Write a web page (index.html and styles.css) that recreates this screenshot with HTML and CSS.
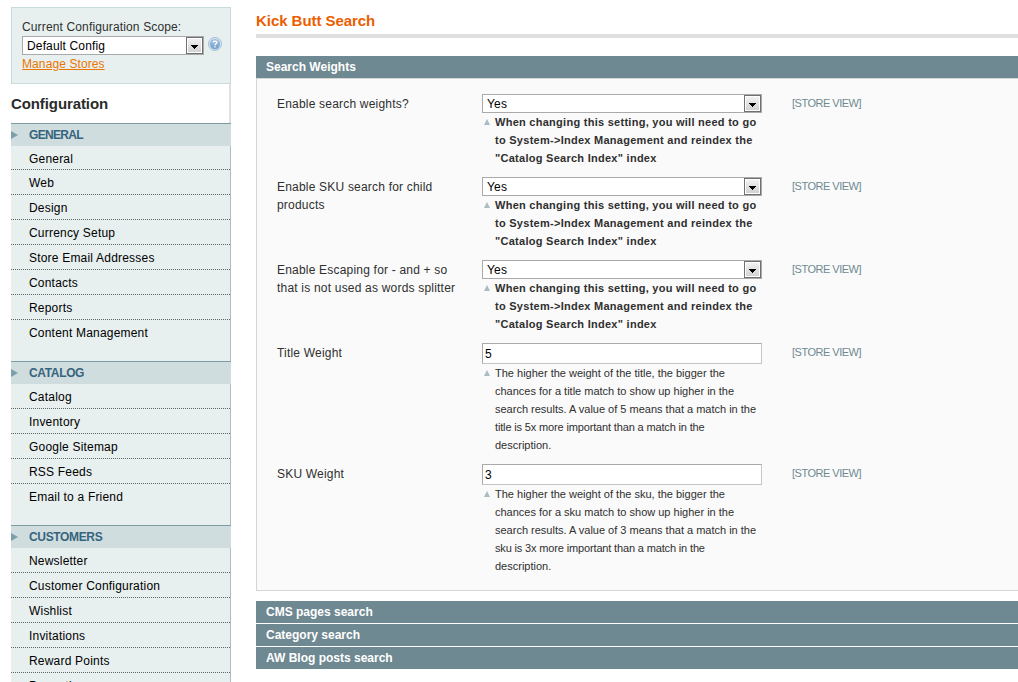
FILE: index.html
```html
<!DOCTYPE html>
<html lang="en">
<head>
<meta charset="utf-8">
<title>Configuration</title>
<link rel="stylesheet" href="styles.css">
</head>
<body>
<div class="page">
  <aside class="sidebar">
    <div class="scope">
      <div class="scope-label">Current Configuration Scope:</div>
      <div class="scope-row">
        <div class="select scope-select"><select><option>Default Config</option></select><span class="arrow"><svg width="7" height="4" viewBox="0 0 7 4" shape-rendering="crispEdges"><path d="M0 0h7v1H6v1H5v1H4v1H3V3H2V2H1V1H0z"/></svg></span></div>
        <svg class="help" width="14" height="14" viewBox="0 0 14 14"><defs><linearGradient id="g" x1="0" y1="0" x2="0" y2="1"><stop offset="0" stop-color="#a9c6e2"/><stop offset="1" stop-color="#6f9dcb"/></linearGradient></defs><circle cx="7" cy="7" r="6.5" fill="#dce8f2" stroke="#9db9d2" stroke-width=".9"/><circle cx="7" cy="7" r="5.2" fill="url(#g)"/><path d="M5.2 5.6C5.2 3.6 8.8 3.6 8.8 5.6 8.8 6.8 7 6.8 7 8.2M7 9.3v1.2" fill="none" stroke="#fff" stroke-width="1.4"/></svg>
      </div>
      <a class="manage" href="#">Manage Stores</a>
    </div>
    <h3 class="side-title">Configuration</h3>
    <nav>
      <section class="group first">
        <h4>GENERAL</h4>
        <ul><li>General</li><li>Web</li><li>Design</li><li>Currency Setup</li><li>Store Email Addresses</li><li>Contacts</li><li>Reports</li><li>Content Management</li></ul>
      </section>
      <section class="group">
        <h4>CATALOG</h4>
        <ul><li>Catalog</li><li>Inventory</li><li>Google Sitemap</li><li>RSS Feeds</li><li>Email to a Friend</li></ul>
      </section>
      <section class="group">
        <h4>CUSTOMERS</h4>
        <ul><li>Newsletter</li><li>Customer Configuration</li><li>Wishlist</li><li>Invitations</li><li>Reward Points</li><li>Promotions</li></ul>
      </section>
    </nav>
  </aside>
  <main class="main">
    <h1>Kick Butt Search</h1>
    <h2 class="bar open">Search Weights</h2>
    <div class="fieldset">
      <div class="row">
        <label>Enable search weights?</label>
        <div class="value">
          <div class="select"><select><option>Yes</option></select><span class="arrow"><svg width="7" height="4" viewBox="0 0 7 4" shape-rendering="crispEdges"><path d="M0 0h7v1H6v1H5v1H4v1H3V3H2V2H1V1H0z"/></svg></span></div>
          <p class="note strong">When changing this setting, you will need to go<br>to System-&gt;Index Management and reindex the<br>"Catalog Search Index" index</p>
        </div>
        <span class="level">[STORE VIEW]</span>
      </div>
      <div class="row">
        <label>Enable SKU search for child<br>products</label>
        <div class="value">
          <div class="select"><select><option>Yes</option></select><span class="arrow"><svg width="7" height="4" viewBox="0 0 7 4" shape-rendering="crispEdges"><path d="M0 0h7v1H6v1H5v1H4v1H3V3H2V2H1V1H0z"/></svg></span></div>
          <p class="note strong">When changing this setting, you will need to go<br>to System-&gt;Index Management and reindex the<br>"Catalog Search Index" index</p>
        </div>
        <span class="level">[STORE VIEW]</span>
      </div>
      <div class="row">
        <label>Enable Escaping for - and + so<br>that is not used as words splitter</label>
        <div class="value">
          <div class="select"><select><option>Yes</option></select><span class="arrow"><svg width="7" height="4" viewBox="0 0 7 4" shape-rendering="crispEdges"><path d="M0 0h7v1H6v1H5v1H4v1H3V3H2V2H1V1H0z"/></svg></span></div>
          <p class="note strong">When changing this setting, you will need to go<br>to System-&gt;Index Management and reindex the<br>"Catalog Search Index" index</p>
        </div>
        <span class="level">[STORE VIEW]</span>
      </div>
      <div class="row">
        <label>Title Weight</label>
        <div class="value">
          <input class="text" value="5">
          <p class="note">The higher the weight of the title, the bigger the<br>chances for a title match to show up higher in the<br>search results. A value of 5 means that a match in the<br><span class="tight">title is 5x more important than a match in the</span><br>description.</p>
        </div>
        <span class="level">[STORE VIEW]</span>
      </div>
      <div class="row">
        <label>SKU Weight</label>
        <div class="value">
          <input class="text" value="3">
          <p class="note">The higher the weight of the sku, the bigger the<br>chances for a sku match to show up higher in the<br>search results. A value of 3 means that a match in the<br><span class="tight">sku is 3x more important than a match in the</span><br>description.</p>
        </div>
        <span class="level">[STORE VIEW]</span>
      </div>
    </div>
    <div class="closed">
      <h2 class="bar">CMS pages search</h2>
      <h2 class="bar">Category search</h2>
      <h2 class="bar">AW Blog posts search</h2>
    </div>
  </main>
</div>
</body>
</html>
```

FILE: styles.css
```css
* { box-sizing: border-box; }
body { margin: 0; background: #fff; color: #2f2f2f; font: 12px/18px "Liberation Sans", Arial, sans-serif; }
h1, h2, h3, h4, ul, p { margin: 0; padding: 0; }
.page { display: flex; gap: 25px; height: 682px; padding: 7px 0 0 11px; overflow: hidden; white-space: nowrap; }

.sidebar { flex: none; width: 220px; }
.scope { height: 77px; padding: 10px 10px 0; border: 1px solid #c9dbdc; background: #e7efef; }
.scope-label { height: 18px; letter-spacing: .14px; }
.scope-row { display: flex; gap: 4px; align-items: flex-start; }
.scope-select { flex: none; width: 182px; }
.help { flex: none; margin-top: 1px; }
.manage { display: block; width: max-content; color: #ea7601; letter-spacing: .1px; line-height: 19px; }
.side-title { height: 39px; border-right: 2px solid #e0e0e0; font-size: 15px; line-height: 40px; letter-spacing: -.1px; color: #2b2b2b; background: #fff; }

.group h4 { position: relative; height: 23px; padding-left: 18px; border-top: 1px solid #7d9ca4; background: #d0dddf; color: #36647d; font-size: 12px; line-height: 22px; letter-spacing: -.35px; }
.group.first h4 { letter-spacing: -.7px; }
.group h4::before { content: ""; position: absolute; left: 0; top: 7px; border: 4px solid transparent; border-left: 7px solid #7c9fa8; border-right: 0; }
.group ul { list-style: none; border-right: 1px solid #abc0c4; background: #e7efef; }
.group li { height: 25px; padding-left: 18px; border-bottom: 1px dotted #5b6567; color: #000; line-height: 26px; letter-spacing: .2px; }
.group.first li:first-child { height: 24px; }
.group li:last-child { height: 41px; border-bottom: 0; }

.main { flex: 1; min-width: 0; }
h1 { height: 31px; margin-bottom: 18px; border-bottom: 4px solid #dfdfdf; color: #eb5e00; font-size: 15px; line-height: 27px; letter-spacing: -.05px; }
.bar { height: 22px; padding-left: 10px; background: #6f8992; color: #fff; font-size: 12px; line-height: 22px; }
.fieldset { height: 513px; padding: 15px 0 0 20px; border: 1px solid #d6d6d6; border-right: 0; background: #fafafa; }
.row { display: grid; grid-template-columns: 205px 280px auto; margin-bottom: 10px; }
.row label { padding-top: 1px; letter-spacing: .2px; }
.level { padding-left: 30px; color: #6f8992; font-size: 11px; letter-spacing: -.5px; }
.select { display: flex; height: 19px; padding: 1px 0 0 0; border: 1px solid #aaa; background: #fff; }
.select select { flex: 1; min-width: 0; height: 16px; padding: 0 0 0 4px; border: 0; outline: 0; appearance: none; background: transparent; color: #000; font: 12px/16px "Liberation Sans", Arial, sans-serif; letter-spacing: .15px; }
.arrow { display: flex; flex: none; align-items: center; justify-content: center; width: 17px; height: 17px; margin-top: -1px; padding-top: 3px; border: 1px solid #707070; box-shadow: inset 0 0 0 1px #fff; background: linear-gradient(#f4f4f4, #cfcfcf); }
.text { display: block; width: 280px; height: 21px; padding: 1px 2px 0; border: 1px solid #aaa; border-right-color: #c5c5c5; border-bottom-color: #c5c5c5; border-radius: 0; background: #fff; color: #000; font: 12px "Liberation Sans", Arial, sans-serif; }
.note { position: relative; padding-left: 13px; font-size: 11px; }
.strong { font-weight: bold; letter-spacing: .27px; }
.tight { letter-spacing: -.15px; }
.note::before { content: ""; position: absolute; left: 2px; top: 6px; border: 3.5px solid transparent; border-top: 0; border-bottom: 6px solid #a9bcc1; }
.closed { display: grid; gap: 1px; margin-top: 10px; }
```
